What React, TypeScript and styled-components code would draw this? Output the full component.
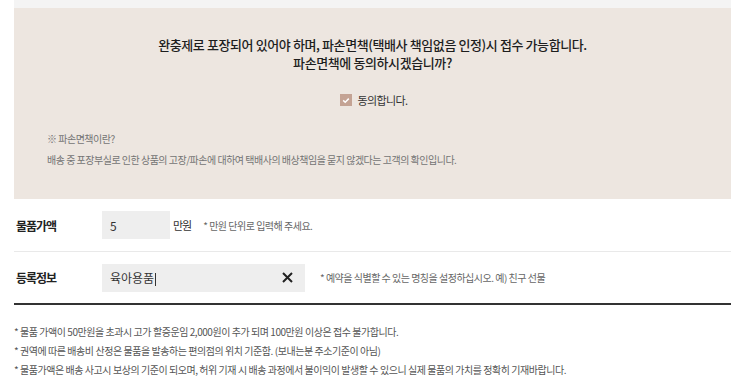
import styled, { createGlobalStyle } from "styled-components";

const GlobalStyle = createGlobalStyle`
  body {
    margin: 0;
    background: #ffffff;
    font-family: "Noto Sans CJK KR", "Noto Sans", sans-serif;
    color: #222;
  }
`;

const Page = styled.div`
  width: 740px;
  padding: 0 9px 0 14px;
  box-sizing: border-box;
`;

const TopStrip = styled.div`
  height: 8px;
  background-color: #f4f4f4;
`;

const NoticePanel = styled.section`
  background-color: #ede6e0;
  height: 191px;
  box-sizing: border-box;
  padding-top: 28px;
  display: flex;
  flex-direction: column;
`;

const NoticeTitle = styled.p`
  margin: 0;
  text-align: center;
  font-size: 13px;
  font-weight: 500;
  line-height: 18px;
  letter-spacing: -0.4px;
  color: #1e1e1e;
`;

const AgreeRow = styled.label`
  margin-top: 22px;
  display: flex;
  justify-content: center;
  align-items: center;
  gap: 5px;
  height: 12px;
  padding-left: 3px;
`;

const CheckBox = styled.span`
  width: 12px;
  height: 12px;
  background-color: #c4a394;
  display: flex;
  align-items: center;
  justify-content: center;
`;

const AgreeText = styled.span`
  font-size: 11px;
  letter-spacing: -0.6px;
  color: #333;
`;

const NoteBlock = styled.div`
  margin-top: 26px;
  padding-left: 33px;
  display: flex;
  flex-direction: column;
  gap: 7px;
`;

const NoteText = styled.p`
  margin: 0;
  font-size: 10px;
  line-height: 14px;
  letter-spacing: -0.5px;
  color: #747474;
`;

const FormRow = styled.div<{ last?: boolean }>`
  height: 53px;
  display: flex;
  align-items: center;
  border-bottom: ${(p) => (p.last ? "2px solid #333" : "1px solid #e9e9e9")};
  box-sizing: border-box;
`;

const RowLabel = styled.div`
  width: 88px;
  box-sizing: border-box;
  padding-left: 2px;
  font-size: 12px;
  font-weight: 700;
  letter-spacing: -1px;
  color: #222;
`;

const InputBox = styled.div<{ width: number }>`
  width: ${(p) => p.width}px;
  height: 28px;
  background-color: #eeeeee;
  box-sizing: border-box;
  padding: 0 8px;
  display: flex;
  align-items: center;
  justify-content: space-between;
  font-size: 12px;
  color: #333;
`;

const Caret = styled.span`
  display: inline-block;
  width: 1px;
  height: 13px;
  background: #333;
  vertical-align: middle;
  margin-left: 1px;
`;

const Unit = styled.span`
  margin-left: 3px;
  font-size: 11px;
  letter-spacing: -1px;
  color: #333;
`;

const Hint = styled.span<{ gap: number }>`
  margin-left: ${(p) => p.gap}px;
  font-size: 10px;
  letter-spacing: -0.5px;
  color: #666;
`;

const ClearButton = styled.span`
  display: flex;
  align-items: center;
  margin-right: 4px;
`;

const InfoList = styled.ul`
  margin: 0;
  padding: 17px 0 0 0;
  list-style: none;
  display: flex;
  flex-direction: column;
`;

const InfoItem = styled.li`
  font-size: 10px;
  line-height: 19px;
  letter-spacing: -0.45px;
  color: #555;
`;

export default function App() {
  return (
    <Page>
      <GlobalStyle />
      <TopStrip />
      <NoticePanel>
        <NoticeTitle>
          완충제로 포장되어 있어야 하며, 파손면책(택배사 책임없음 인정)시 접수 가능합니다.
        </NoticeTitle>
        <NoticeTitle>파손면책에 동의하시겠습니까?</NoticeTitle>
        <AgreeRow>
          <CheckBox>
            <svg width="8" height="7" viewBox="0 0 8 7">
              <path d="M1.2 3.4 L3.2 5.2 L6.8 1.6" fill="none" stroke="#fff" strokeWidth="1.5" />
            </svg>
          </CheckBox>
          <AgreeText>동의합니다.</AgreeText>
        </AgreeRow>
        <NoteBlock>
          <NoteText>※ 파손면책이란?</NoteText>
          <NoteText>
            배송 중 포장부실로 인한 상품의 고장/파손에 대하여 택배사의 배상책임을 묻지 않겠다는 고객의 확인입니다.
          </NoteText>
        </NoteBlock>
      </NoticePanel>

      <FormRow>
        <RowLabel>물품가액</RowLabel>
        <InputBox width={68}>5</InputBox>
        <Unit>만원</Unit>
        <Hint gap={12}>* 만원 단위로 입력해 주세요.</Hint>
      </FormRow>
      <FormRow last>
        <RowLabel>등록정보</RowLabel>
        <InputBox width={203}>
          <span>
            육아용품
            <Caret />
          </span>
          <ClearButton>
            <svg width="11" height="11" viewBox="0 0 11 11">
              <path d="M1 1 L10 10 M10 1 L1 10" stroke="#222" strokeWidth="2" />
            </svg>
          </ClearButton>
        </InputBox>
        <Hint gap={15}>* 예약을 식별할 수 있는 명칭을 설정하십시오. 예) 친구 선물</Hint>
      </FormRow>

      <InfoList>
        <InfoItem>
          * 물품 가액이 50만원을 초과시 고가 할증운임 2,000원이 추가 되며 100만원 이상은 접수 불가합니다.
        </InfoItem>
        <InfoItem>
          * 권역에 따른 배송비 산정은 물품을 발송하는 편의점의 위치 기준함. (보내는분 주소기준이 아님)
        </InfoItem>
        <InfoItem>
          * 물품가액은 배송 사고시 보상의 기준이 되오며, 허위 기재 시 배송 과정에서 불이익이 발생할 수 있으니 실제 물품의 가치를 정확히 기재바랍니다.
        </InfoItem>
      </InfoList>
    </Page>
  );
}
